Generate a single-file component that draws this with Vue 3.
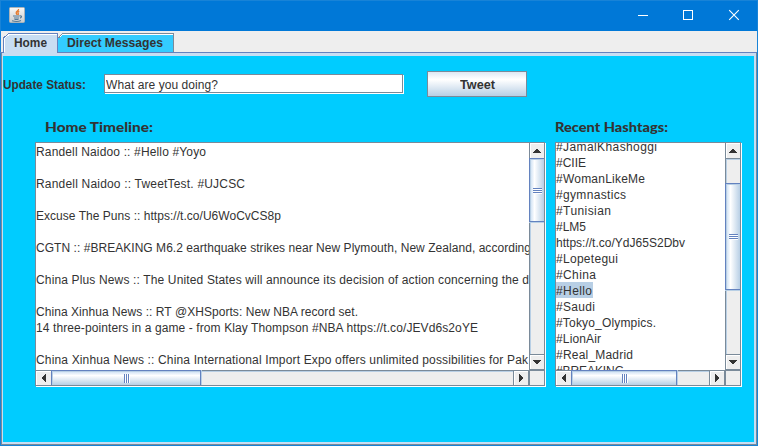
<script setup>
const tweets = [
  { t: 'Randell Naidoo :: #Hello #Yoyo', w: 170 },
  { t: '' },
  { t: 'Randell Naidoo :: TweetTest. #UJCSC', w: 209 },
  { t: '' },
  { t: 'Excuse The Puns :: https://t.co/U6WoCvCS8p', w: 245 },
  { t: '' },
  { t: 'CGTN :: #BREAKING M6.2 earthquake strikes near New Plymouth, New Zealand, according', w: 495 },
  { t: '' },
  { t: 'China Plus News :: The United States will announce its decision of action concerning the d', w: 493 },
  { t: '' },
  { t: 'China Xinhua News :: RT @XHSports: New NBA record set.', w: 322 },
  { t: '14 three-pointers in a game - from Klay Thompson #NBA https://t.co/JEVd6s2oYE', w: 442 },
  { t: '' },
  { t: 'China Xinhua News :: China International Import Expo offers unlimited possibilities for Pak', w: 492 }
]
const tags = [
  { t: '#JamalKhashoggi', w: 101 },
  { t: '#CIIE', w: 30 },
  { t: '#WomanLikeMe', w: 89 },
  { t: '#gymnastics', w: 70 },
  { t: '#Tunisian', w: 55 },
  { t: '#LM5', w: 30 },
  { t: 'https://t.co/YdJ65S2Dbv', w: 129 },
  { t: '#Lopetegui', w: 62 },
  { t: '#China', w: 40 },
  { t: '#Hello', w: 36, selected: true },
  { t: '#Saudi', w: 39 },
  { t: '#Tokyo_Olympics.', w: 100 },
  { t: '#LionAir', w: 45 },
  { t: '#Real_Madrid', w: 77 },
  { t: '#BREAKING', w: 68 }
]
const panes = [
  { cls: 'timeline', lines: tweets, v: [0, 64], h: [0, 150] },
  { cls: 'hashtags', lines: tags, v: [25, 107], h: [0, 106] }
]
</script>

<template>
  <div class="window">
    <header class="titlebar">
      <svg class="java" width="16" height="16" viewBox="0 0 16 16">
        <defs><linearGradient id="jg" x2="0" y2="1"><stop stop-color="#f8f8f6" /><stop offset="1" stop-color="#c9cccd" /></linearGradient></defs>
        <rect x=".5" y=".5" width="15" height="15" rx="1" fill="url(#jg)" stroke="#a9b3ba" />
        <path d="M9.500 2c.8 1.700-2.800 2.400-2.300 4 .2.7.9 1.100.9 1.900M10.300 4.400c-1.900.7-1.600 1.500-1 2.200.3.5.1.9-.3 1.300" fill="none" stroke="#e5792b" stroke-width="1.300" />
        <path d="M4 9h6.500M5 11h5M5.500 12.500h4M3 13.800c2.500.8 7 .7 9-.2M10.700 9c2.500-.8 2.400 1.700.2 2.100" fill="none" stroke="#557b98" stroke-width="1.100" />
      </svg>
      <svg class="controls" width="104" height="12" viewBox="0 0 104 12" fill="none" stroke="#fff">
        <path d="M1 6.500h10M46.500 1.500h9v9h-9z" shape-rendering="crispEdges" />
        <path d="M92.200 1.200l9.600 9.600M101.800 1.200l-9.600 9.600" stroke-width="1.100" />
      </svg>
    </header>
    <nav class="tabs">
      <svg class="tab-art" width="176" height="23" viewBox="0 0 176 23" shape-rendering="crispEdges">
        <path d="M4 22V7l5-5h48v20z" fill="#c8ddf2" />
        <path d="M58 21V7l4-5h112v19z" fill="#3cf" />
        <path d="M59.500 6l4-3H173" fill="none" stroke="#fff" />
        <path d="M58.500 7l4-4.500H173.500V21" fill="none" stroke="#7a8a99" />
        <path d="M4.500 21V7.500l5-4.500H57" fill="none" stroke="#fff" />
        <path d="M0 21.500H3.500V7l5-4.500H57.500V21.500H176" fill="none" stroke="#6382bf" />
        <path d="M5 21h52v2H5z" fill="#c8ddf2" />
      </svg>
      <span class="tab home"><svg width="33" height="14"><text x="0" y="11" textLength="33" lengthAdjust="spacingAndGlyphs">Home</text></svg></span>
      <span class="tab dm"><svg width="96" height="14"><text x="0" y="11" textLength="96" lengthAdjust="spacingAndGlyphs">Direct Messages</text></svg></span>
    </nav>
    <main class="content">
      <div class="status">
        <svg class="label" width="85" height="16"><text x="0" y="12" textLength="83" lengthAdjust="spacingAndGlyphs">Update Status:</text></svg>
        <div class="field"><svg width="120" height="16"><text x="0" y="12" textLength="112">What are you doing?</text></svg></div>
        <button class="tweet"><svg width="36" height="16"><text x="0" y="13" textLength="35" lengthAdjust="spacingAndGlyphs">Tweet</text></svg></button>
      </div>
      <div class="headings">
        <svg width="510" height="20"><text x="0" y="14" textLength="108" lengthAdjust="spacingAndGlyphs">Home Timeline:</text></svg>
        <svg width="116" height="20"><text x="0" y="14" textLength="113" lengthAdjust="spacingAndGlyphs">Recent Hashtags:</text></svg>
      </div>
      <div class="panes">
        <section v-for="p in panes" :key="p.cls" class="pane" :class="p.cls">
          <div class="view">
            <div class="lines">
              <div v-for="(l, i) in p.lines" :key="i" class="line">
                <svg v-if="l.t" :class="{ selected: l.selected }" :width="l.w + 1" height="16"><text x="0" y="13" :textLength="l.w">{{ l.t }}</text></svg>
              </div>
            </div>
          </div>
          <div class="vbar">
            <div class="btn up"><svg width="8" height="4" viewBox="0 0 8 4" shape-rendering="crispEdges"><path d="M3 0h2v1h1v1h1v1h1v1H0V3h1V2h1V1h1z" /></svg></div>
            <div class="track">
              <div class="thumb" :style="{ marginTop: p.v[0] + 'px', height: p.v[1] + 'px' }"><i class="grip"></i></div>
            </div>
            <div class="btn down"><svg width="8" height="4" viewBox="0 0 8 4" shape-rendering="crispEdges"><path d="M0 0h8v1H7v1H6v1H5v1H3V3H2V2H1V1H0z" /></svg></div>
          </div>
          <div class="hbar">
            <div class="btn left"><svg width="4" height="8" viewBox="0 0 4 8" shape-rendering="crispEdges"><path d="M4 0v8H3V7H2V6H1V5H0V3h1V2h1V1h1V0z" /></svg></div>
            <div class="track">
              <div class="thumb" :style="{ marginLeft: p.h[0] + 'px', width: p.h[1] + 'px' }"><i class="grip"></i></div>
            </div>
            <div class="btn right"><svg width="4" height="8" viewBox="0 0 4 8" shape-rendering="crispEdges"><path d="M0 0v8h1V7h1V6h1V5h1V3H3V2H2V1H1V0z" /></svg></div>
          </div>
          <div class="corner"></div>
        </section>
      </div>
    </main>
  </div>
</template>

<style>
body { margin: 0; overflow: hidden; }
</style>

<style scoped>
* { box-sizing: border-box; }
svg { display: block; flex: none; }
text { fill: #333; }
.window { width: 758px; height: 446px; display: flex; flex-direction: column; background: #eee; border: 1px solid #1883d7; border-top: 0; font: 12px "Liberation Sans", Arial, sans-serif; }
.titlebar { height: 31px; flex: none; background: #0078d7; border-top: 1px solid #1883d7; display: flex; justify-content: space-between; align-items: flex-start; padding: 6px 16px 0 8px; }
.controls { margin-top: 2px; }
.tabs { height: 22px; flex: none; display: flex; position: relative; background: #eee; border-bottom: 1px solid #6382bf; }
.tab-art { position: absolute; left: -1px; top: 0; }
.tab { position: relative; font-weight: bold; padding-top: 5px; }
.home { margin-left: 13px; }
.dm { margin-left: 20px; }
.content { flex: 1; min-height: 0; background: #0cf; border-style: solid; border-color: #c8ddf2; border-width: 3px 2px 2px 1px; margin: 0 1px 1px; outline: 1px solid #7a8a99; clip-path: inset(0 -1px -1px -1px); }
.status { display: flex; height: 57px; padding-top: 15px; font-weight: bold; }
.label { margin-top: 6px; }
.field { width: 299px; height: 19px; margin: 3px 24px 0 16px; background: #fff; border: 1px solid #7a8a99; box-shadow: 1px 1px #fff; padding: 2px 1px; font-weight: normal; }
.tweet { width: 100px; height: 26px; border: 1px solid #7a8a99; padding: 0 0 1px 32px; background: linear-gradient(#dde8f3, #fff 30%, #fff 32%, #b8cfe5); font: inherit; text-align: left; display: flex; align-items: center; }
.headings { display: flex; height: 29px; padding: 5px 0 0 42px; font: 900 14px Lato, sans-serif; }
.panes { display: flex; gap: 10px; padding-left: 32px; }
.pane { display: grid; height: 244px; grid-template-rows: 227px 15px; border: 1px solid #7a8a99; box-shadow: 1px 1px #fff; background: #eee; }
.timeline { width: 510px; grid-template-columns: 493px 15px; }
.hashtags { width: 186px; grid-template-columns: 169px 15px; }
.view { background: #fff; overflow: hidden; display: flex; align-items: flex-start; min-width: 0; min-height: 0; }
.hashtags .lines { margin-top: -5px; }
.line { height: 16px; }
.selected { background: #b8cfe5; }
.vbar { display: flex; flex-direction: column; border-left: 1px solid #7a8a99; }
.hbar { display: flex; border-top: 1px solid #7a8a99; }
.btn { background: #eee; flex: none; display: flex; align-items: center; justify-content: center; box-shadow: inset 1px 1px #fff; fill: #333; }
.vbar .btn { width: 14px; height: 16px; }
.hbar .btn { height: 14px; width: 16px; }
.up { border-bottom: 1px solid #7a8a99; }
.down { border-top: 1px solid #7a8a99; border-bottom: 1px solid #7a8a99; }
.left { border-right: 1px solid #7a8a99; }
.right { border-left: 1px solid #7a8a99; border-right: 1px solid #7a8a99; }
.track { flex: 1; min-width: 0; min-height: 0; display: flex; box-shadow: inset 1px 1px #b8cfe5; }
.thumb { display: flex; align-items: center; justify-content: center; flex: none; position: relative; }
.vbar .thumb { width: 15px; margin-left: -1px; top: -1px; border: 1px solid #6382bf; border-right: 0; background: linear-gradient(90deg, #c8ddf2, #fff 32%, #b8cfe5); box-shadow: inset 1px 1px #b8cfe5, 0 1px #b8cfe5; }
.hbar .thumb { height: 15px; margin-top: -1px; left: -1px; border: 1px solid #6382bf; border-bottom: 0; background: linear-gradient(#c8ddf2, #fff 32%, #b8cfe5); box-shadow: inset 1px 1px #b8cfe5, 1px 0 #b8cfe5; }
.vbar .grip { width: 9px; height: 6px; margin: 2px 0 0 1px; background: repeating-linear-gradient(#6382bf 0 1px, #fff 1px 2px); }
.hashtags .vbar .grip { margin-top: 1px; }
.hbar .grip { height: 9px; width: 6px; margin: 1px 0 0 2px; background: repeating-linear-gradient(90deg, #6382bf 0 1px, #fff 1px 2px); }
.corner { border-left: 1px solid #7a8a99; border-top: 1px solid #7a8a99; }
</style>
